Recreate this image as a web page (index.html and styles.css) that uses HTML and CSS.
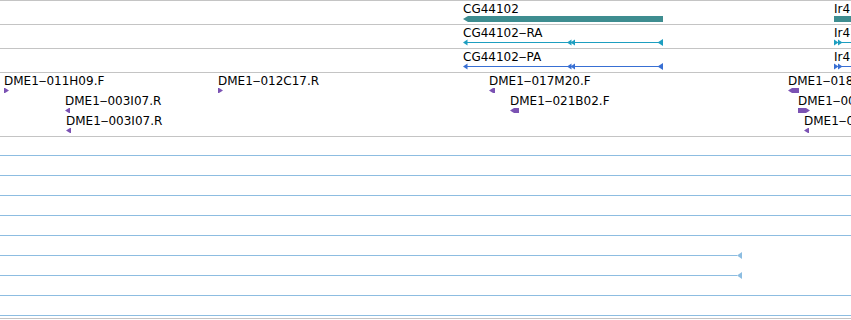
FILE: index.html
```html
<!DOCTYPE html>
<html lang="en">
<head>
    <meta charset="UTF-8">
    <meta name="viewport" content="width=device-width, initial-scale=1.0">
    <title>tracks</title>
    <link rel="stylesheet" href="styles.css">
</head>
<body>

<div class="browser">

    <!-- genes -->
    <div class="track track-gene">
        <div class="feature" style="left:463px">
            <span class="label">CG44102</span>
            <div class="glyph"><div class="gene-bar minus" style="width:200px"></div></div>
        </div>
        <div class="feature" style="left:834px">
            <span class="label">Ir4</span>
            <div class="glyph"><div class="gene-bar" style="width:40px"></div></div>
        </div>
    </div>

    <!-- transcripts -->
    <div class="track track-gene">
        <div class="feature mrna" style="left:463px">
            <span class="label">CG44102‒RA</span>
            <div class="glyph">
                <svg width="201" height="7" viewBox="0 0 201 7">
                    <rect x="2" y="3" width="196" height="1"/>
                    <polygon points="0,3.5 4.5,0.5 4.5,6.5"/>
                    <polygon points="104,3.5 108.5,0.5 108.5,6.5"/>
                    <polygon points="107.5,3.5 112,0.5 112,6.5"/>
                    <polygon points="194.5,3.5 200,0 200,7"/>
                </svg>
            </div>
        </div>
        <div class="feature mrna" style="left:834px">
            <span class="label">Ir4</span>
            <div class="glyph">
                <svg width="30" height="7" viewBox="0 0 30 7">
                    <rect x="6" y="3" width="24" height="1"/>
                    <polygon points="0,0.5 4.5,3.5 0,6.5"/>
                    <polygon points="4,0.5 8.5,3.5 4,6.5"/>
                </svg>
            </div>
        </div>
    </div>

    <!-- proteins -->
    <div class="track track-gene">
        <div class="feature protein" style="left:463px">
            <span class="label">CG44102‒PA</span>
            <div class="glyph">
                <svg width="201" height="7" viewBox="0 0 201 7">
                    <rect x="2" y="3" width="196" height="1"/>
                    <polygon points="0,3.5 4.5,0.5 4.5,6.5"/>
                    <polygon points="104,3.5 108.5,0.5 108.5,6.5"/>
                    <polygon points="107.5,3.5 112,0.5 112,6.5"/>
                    <polygon points="194.5,3.5 200,0 200,7"/>
                </svg>
            </div>
        </div>
        <div class="feature protein" style="left:834px">
            <span class="label">Ir4</span>
            <div class="glyph">
                <svg width="30" height="7" viewBox="0 0 30 7">
                    <rect x="6" y="3" width="24" height="1"/>
                    <polygon points="0,0.5 4.5,3.5 0,6.5"/>
                    <polygon points="4,0.5 8.5,3.5 4,6.5"/>
                </svg>
            </div>
        </div>
    </div>

    <!-- BAC clone ends -->
    <div class="track track-clones">
        <div class="clone-row">
            <div class="feature" style="left:4px">
                <span class="label">DME1‒011H09.F</span>
                <div class="glyph"><div class="clone fwd"></div></div>
            </div>
            <div class="feature" style="left:218px">
                <span class="label">DME1‒012C17.R</span>
                <div class="glyph"><div class="clone fwd"></div></div>
            </div>
            <div class="feature" style="left:489px">
                <span class="label">DME1‒017M20.F</span>
                <div class="glyph"><div class="clone rev" style="width:6px"></div></div>
            </div>
            <div class="feature" style="left:788px">
                <span class="label">DME1‒018</span>
                <div class="glyph"><div class="clone rev" style="width:11px"></div></div>
            </div>
        </div>
        <div class="clone-row">
            <div class="feature" style="left:65px">
                <span class="label">DME1‒003I07.R</span>
                <div class="glyph"><div class="clone rev"></div></div>
            </div>
            <div class="feature" style="left:510px">
                <span class="label">DME1‒021B02.F</span>
                <div class="glyph"><div class="clone rev" style="width:9px"></div></div>
            </div>
            <div class="feature" style="left:798px">
                <span class="label">DME1‒00</span>
                <div class="glyph"><div class="clone fwd" style="width:12px"></div></div>
            </div>
        </div>
        <div class="clone-row">
            <div class="feature" style="left:66px">
                <span class="label">DME1‒003I07.R</span>
                <div class="glyph"><div class="clone rev"></div></div>
            </div>
            <div class="feature" style="left:804px">
                <span class="label">DME1‒0</span>
                <div class="glyph"><div class="clone rev"></div></div>
            </div>
        </div>
    </div>

    <!-- reads -->
    <div class="track track-reads">
        <div class="read-row"><div class="read"></div></div>
        <div class="read-row"><div class="read"></div></div>
        <div class="read-row"><div class="read"></div></div>
        <div class="read-row"><div class="read"></div></div>
        <div class="read-row"><div class="read"></div></div>
        <div class="read-row"><div class="read short"></div><div class="read-end"></div></div>
        <div class="read-row"><div class="read short"></div><div class="read-end"></div></div>
        <div class="read-row"><div class="read"></div></div>
        <div class="read-row"><div class="read"></div></div>
    </div>

</div>

</body>
</html>
```

FILE: styles.css
```css
body {
    margin: 0;
    font-family: "DejaVu Sans", sans-serif;
    font-size: 12px;
    color: #000;
    background: #fff;
    overflow: hidden;
}

.browser {
    width: 851px;
}

.track {
    position: relative;
    border-top: 1px solid #c4c4c4;
    overflow: hidden;
}

.track-gene { height: 23px; }
.track-clones { height: 63px; }

.track-reads {
    height: 166px;
    padding-top: 15px;
    border-bottom: 1px solid #c4c4c4;
}

.clone-row {
    position: relative;
    height: 20px;
}

.feature {
    position: absolute;
    top: 0;
    padding-top: 2px;
}

.label {
    display: block;
    height: 13px;
    line-height: 13px;
    white-space: nowrap;
}

.glyph {
    display: flex;
    align-items: center;
    height: 7px;
    margin-top: -1px;
}

.gene-bar {
    height: 6px;
    align-self: flex-end;
    background: #3e8d90;
}

.gene-bar.minus {
    clip-path: polygon(0 50%, 5px 0, 100% 0, 100% 100%, 5px 100%);
}

.mrna svg { fill: #1d9ec0; display: block; }
.protein svg { fill: #386fd3; display: block; }

.clone {
    width: 5px;
    height: 5px;
    background: #7b52b3;
}

.clone.fwd { clip-path: polygon(0 0, calc(100% - 4px) 0, 100% 50%, calc(100% - 4px) 100%, 0 100%); }
.clone.rev { clip-path: polygon(0 50%, 4px 0, 100% 0, 100% 100%, 4px 100%); }

.read-row {
    display: flex;
    align-items: center;
    height: 7px;
    margin-bottom: 13px;
}

.read {
    flex: 1;
    height: 1px;
    background: #8dbde1;
}

.read.short {
    flex: none;
    width: 737px;
}

.read-end {
    width: 5px;
    height: 7px;
    background: #8dbde1;
    clip-path: polygon(0 50%, 100% 0, 100% 100%);
}
```
